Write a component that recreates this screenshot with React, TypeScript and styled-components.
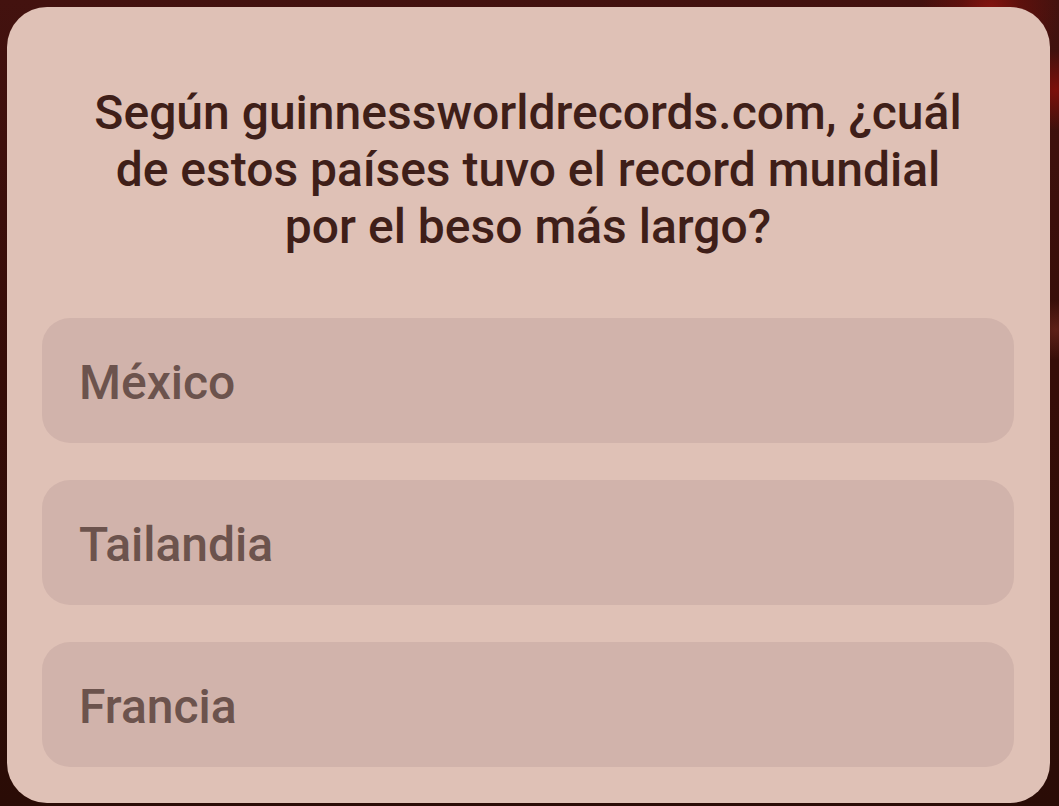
import React from "react";
import styled, { createGlobalStyle } from "styled-components";

const Global = createGlobalStyle`
  html, body { margin: 0; padding: 0; }
  body {
    width: 1059px;
    height: 806px;
    overflow: hidden;
    background: #2c0d07;
    font-family: Roboto, "Noto Sans", sans-serif;
  }
`;

const Backdrop = styled.div`
  width: 1059px;
  height: 806px;
  box-sizing: border-box;
  padding: 7px 9px 3px 7px;
  background:
    radial-gradient(circle at 990px 10px, rgba(150, 20, 15, 0.8) 0, rgba(120, 15, 10, 0.5) 30px, transparent 70px),
    radial-gradient(circle at 1056px 90px, rgba(140, 15, 10, 0.8) 0, transparent 40px),
    radial-gradient(circle at 1056px 330px, rgba(110, 40, 30, 0.7) 0, transparent 30px),
    linear-gradient(180deg, #43120f 0%, #360d08 45%, #2a0c06 100%);
`;

const Card = styled.div`
  height: 100%;
  box-sizing: border-box;
  background: #dfc1b6;
  border-radius: 40px;
  padding: 77px 36px 0 35px;
  display: flex;
  flex-direction: column;
`;

const Question = styled.h1`
  margin: 0 0 63px;
  text-align: center;
  font-size: 48px;
  line-height: 57px;
  font-weight: 500;
  color: #3f1f19;
  letter-spacing: 0;
`;

const Options = styled.div`
  display: flex;
  flex-direction: column;
  gap: 37px;
`;

const Option = styled.div`
  height: 125px;
  box-sizing: border-box;
  border-radius: 28px;
  background: #d1b3ab;
  display: flex;
  align-items: center;
  padding: 3px 0 0 37px;
  font-size: 48px;
  font-weight: 500;
  color: #6c534d;
`;

const options = ["México", "Tailandia", "Francia"];

export default function App() {
  return (
    <>
      <Global />
      <Backdrop>
        <Card>
          <Question>
            Según guinnessworldrecords.com, ¿cuál
            <br />
            de estos países tuvo el record mundial
            <br />
            por el beso más largo?
          </Question>
          <Options>
            {options.map((o) => (
              <Option key={o}>{o}</Option>
            ))}
          </Options>
        </Card>
      </Backdrop>
    </>
  );
}
